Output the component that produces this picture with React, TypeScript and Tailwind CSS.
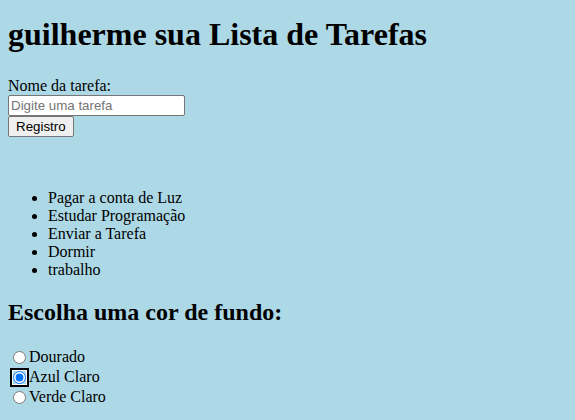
import { useState } from "react";

const tarefas = [
  "Pagar a conta de Luz",
  "Estudar Programação",
  "Enviar a Tarefa",
  "Dormir",
  "trabalho",
];

const cores = [
  { id: "dourado", nome: "Dourado" },
  { id: "azul", nome: "Azul Claro" },
  { id: "verde", nome: "Verde Claro" },
];

export default function App() {
  const [cor, setCor] = useState("azul");

  return (
    <div className="min-h-screen bg-[#add8e6] px-2 pt-[16px] font-['Liberation_Serif','Times_New_Roman',serif] text-[16px] text-black">
      <h1 className="text-[32px] font-bold leading-[37px]">guilherme sua Lista de Tarefas</h1>

      <label htmlFor="tarefa" className="mt-[24px] block leading-[18px]">
        Nome da tarefa:
      </label>
      <input
        id="tarefa"
        type="text"
        placeholder="Digite uma tarefa"
        className="block h-[21px] w-[177px] rounded-[2px] border border-[#767676] bg-white px-[2px] font-['Liberation_Sans',Arial,sans-serif] text-[13.33px] placeholder:text-[#757575]"
      />
      <button className="block h-[21px] rounded-[2px] border border-[#767676] bg-[#efefef] px-[7px] font-['Liberation_Sans',Arial,sans-serif] text-[13.33px] leading-[19px]">
        Registro
      </button>

      <ul className="mt-[52px] list-disc pl-10 leading-[18px]">
        {tarefas.map((t) => (
          <li key={t}>{t}</li>
        ))}
      </ul>

      <h2 className="mt-[19px] text-[24px] font-bold leading-[28px]">Escolha uma cor de fundo:</h2>

      <div className="mt-[21px]">
        {cores.map((c) => (
          <div key={c.id} className="flex h-[20px] items-center">
            <input
              type="radio"
              name="cor"
              id={c.id}
              checked={cor === c.id}
              onChange={() => setCor(c.id)}
              className={
                cor === c.id
                  ? "mr-[3px] ml-[5px] h-[13px] w-[13px] rounded-[4px] accent-[#0075ff] ring-2 ring-black ring-offset-1 ring-offset-white"
                  : "mr-[3px] ml-[5px] h-[13px] w-[13px] accent-[#0075ff]"
              }
            />
            <label htmlFor={c.id} className="leading-[18px]">
              {c.nome}
            </label>
          </div>
        ))}
      </div>
    </div>
  );
}
